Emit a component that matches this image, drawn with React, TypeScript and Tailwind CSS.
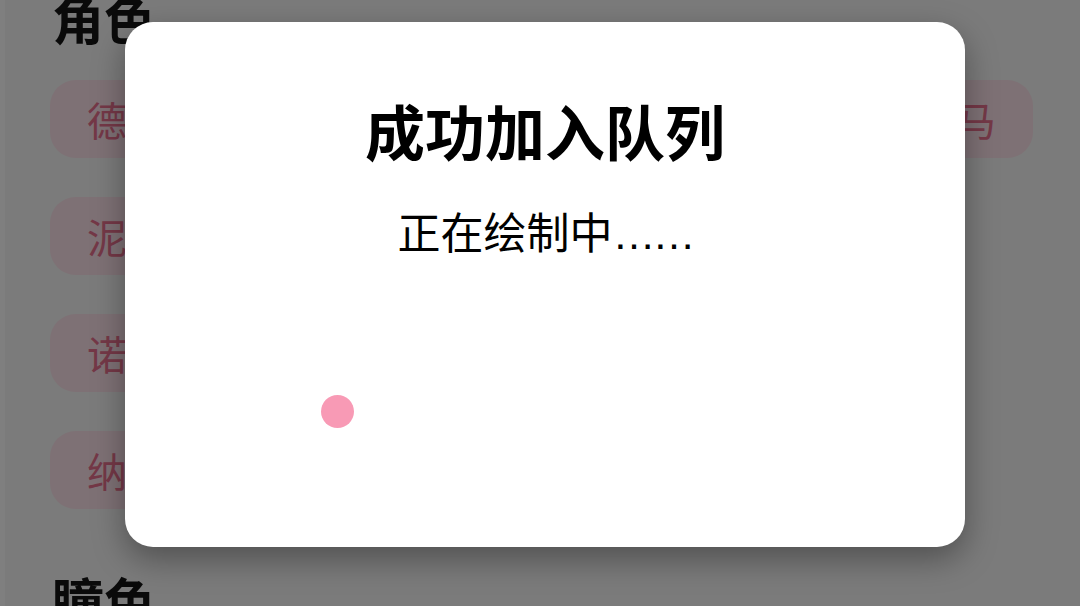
import React from "react";

const font = { fontFamily: '"Noto Sans CJK SC", "Noto Sans", sans-serif' };

function Pill({ label }: { label: string }) {
  return (
    <div className="h-[78px] shrink-0 rounded-[26px] bg-[#fde2ea] px-[37px] flex items-center text-[40px] leading-none text-[#e8708f]">
      {label}
    </div>
  );
}

export default function App() {
  return (
    <div className="relative w-[1080px] h-[606px] overflow-hidden flex bg-[#f6f6f6]" style={font}>
      {/* left gutter */}
      <div className="w-[5px] shrink-0 bg-white" />

      {/* page underneath the dialog */}
      <div className="flex-1 flex flex-col pl-[45px] pr-[47px]">
        <h2 className="mt-[-8px] ml-[2px] text-[52px] leading-none font-bold text-[#151515]">角色</h2>
        <div className="mt-[36px] flex flex-col gap-[39px]">
          <div className="flex justify-between">
            <Pill label="德丽莎" />
            <Pill label="阿马" />
          </div>
          <div className="flex gap-[24px]">
            <Pill label="泥岩" />
            <Pill label="琪亚娜" />
            <Pill label="芽衣" />
          </div>
          <div className="flex gap-[24px]">
            <Pill label="诺艾尔" />
            <Pill label="布洛妮娅" />
          </div>
          <div className="flex gap-[24px]">
            <Pill label="纳西妲" />
            <Pill label="符华" />
            <Pill label="希儿" />
          </div>
        </div>
        <h2 className="mt-[65px] ml-[2px] text-[52px] leading-none font-bold text-[#151515]">瞳色</h2>
      </div>

      {/* dimming overlay */}
      <div className="absolute inset-0 bg-black/50" />

      {/* dialog */}
      <div className="absolute left-[125px] top-[22px] w-[840px] h-[525px] rounded-[28px] bg-white shadow-[0_12px_32px_rgba(0,0,0,0.35)] flex flex-col items-center">
        <h1 className="mt-[65px] text-[60px] leading-[86px] font-bold text-black">成功加入队列</h1>
        <p className="mt-[27px] text-[43px] leading-[60px] text-black">
          正在绘制中<span style={{ fontFamily: '"Liberation Sans", sans-serif' }} className="text-[43px] tracking-[-3px]">……</span>
        </p>
        {/* loading dot */}
        <div className="absolute left-[196px] top-[373px] w-[33px] h-[33px] rounded-full bg-[#f89ab5] blur-[0.6px]" />
      </div>
    </div>
  );
}
